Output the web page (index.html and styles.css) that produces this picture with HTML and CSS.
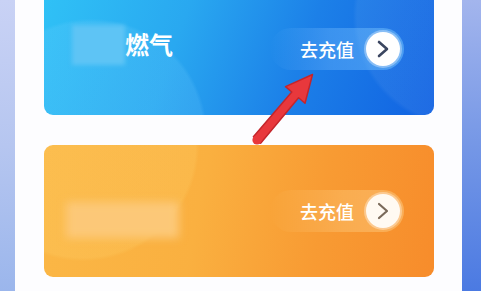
FILE: index.html
```html
<!DOCTYPE html>
<html lang="zh">
<head>
<meta charset="utf-8">
<link rel="stylesheet" href="styles.css">
</head>
<body>
<div class="screen">
  <div class="strip strip-left"></div>
  <div class="panel">
    <div class="card card-blue">
      <div class="card-left">
        <div class="blur blur-blue"></div>
        <div class="title">燃气</div>
      </div>
      <div class="action">
        <span class="action-text">去充值</span>
        <span class="circle">
          <svg width="16" height="18" viewBox="0 0 16 18"><path d="M4 2 L12 9 L4 16" fill="none" stroke="#3b4660" stroke-width="2.6" stroke-linecap="round" stroke-linejoin="round"/></svg>
        </span>
      </div>
    </div>
    <div class="card card-orange">
      <div class="card-left">
        <div class="blur blur-orange"></div>
      </div>
      <div class="action">
        <span class="action-text">去充值</span>
        <span class="circle">
          <svg width="16" height="18" viewBox="0 0 16 18"><path d="M4 2 L12 9 L4 16" fill="none" stroke="#7a6a5a" stroke-width="2.2" stroke-linecap="round" stroke-linejoin="round"/></svg>
        </span>
      </div>
    </div>
  </div>
  <div class="strip strip-right"></div>
  <svg class="pointer" width="90" height="100" viewBox="240 60 90 100">
    <path d="M260.6 143.2 L298.6 97.8 L305 103.2 L312.5 74.5 L285.5 86.6 L291.8 92 L253.4 136.8 Z" fill="#e8383c" stroke="#c4252b" stroke-width="1.5" stroke-linejoin="round"/>
    <circle cx="257" cy="140" r="4.6" fill="#e8383c"/>
  </svg>
</div>
</body>
</html>
```

FILE: styles.css
```css
html, body {
  margin: 0;
  padding: 0;
}
body {
  width: 481px;
  height: 291px;
  overflow: hidden;
  font-family: "Noto Sans CJK SC", "Noto Sans", sans-serif;
}
.screen {
  position: relative;
  display: flex;
  width: 481px;
  height: 291px;
  overflow: hidden;
}
.strip-left {
  width: 15px;
  background: linear-gradient(180deg, #c9d2f5 0%, #b6c6f0 50%, #9bb6ec 100%);
}
.strip-right {
  width: 19px;
  background: linear-gradient(180deg, #a3b5ed 0%, #7597e6 50%, #4b7ae2 100%);
}
.panel {
  flex: 1;
  background: #fdfdff;
  padding: 0 28px 0 29px;
  display: flex;
  flex-direction: column;
  gap: 30px;
}
.card {
  height: 132px;
  border-radius: 9px;
  display: flex;
  align-items: center;
  justify-content: space-between;
  padding: 0 34px 0 28px;
  position: relative;
  overflow: hidden;
  flex-shrink: 0;
}
.card-blue {
  margin-top: -17px;
  background:
    radial-gradient(circle at 12% 115%, rgba(120, 210, 255, 0.18) 0, rgba(120, 210, 255, 0.18) 30%, transparent 31%),
    radial-gradient(circle at 108% 25%, rgba(255, 255, 255, 0.06) 0, rgba(255, 255, 255, 0.06) 25%, transparent 26%),
    linear-gradient(110deg, #30c2f6 0%, #29a8f0 35%, #1c80e8 65%, #1162e2 100%);
}
.card-orange {
  background:
    radial-gradient(circle at 10% 0%, rgba(255, 220, 120, 0.18) 0, rgba(255, 220, 120, 0.18) 30%, transparent 31%),
    linear-gradient(100deg, #fbb746 0%, #fab040 40%, #f89b33 70%, #f78c2b 100%);
}
.card-left {
  display: flex;
  align-items: center;
}
.blur {
  filter: blur(2px);
}
.blur-blue {
  width: 53px;
  height: 40px;
  background: #5ec4f5;
  margin-top: -8px;
}
.title {
  color: #ffffff;
  font-size: 24px;
  font-weight: 700;
  line-height: 30px;
  margin-top: -11px;
}
.blur-orange {
  width: 113px;
  height: 36px;
  background: #fcc878;
  filter: blur(4px);
  margin-top: 18px;
  margin-left: -6px;
}
.action {
  display: flex;
  align-items: center;
  gap: 12px;
  padding: 4px 4px 4px 30px;
  margin-right: -4px;
  border-radius: 22px;
}
.card-blue .action {
  background: linear-gradient(90deg, rgba(255, 255, 255, 0) 0%, rgba(120, 190, 255, 0.35) 45%, rgba(120, 200, 255, 0.5) 100%);
}
.card-orange .action {
  background: linear-gradient(90deg, rgba(255, 255, 255, 0) 0%, rgba(255, 220, 150, 0.30) 55%, rgba(255, 230, 170, 0.35) 100%);
}
.action-text {
  color: #ffffff;
  font-size: 18px;
  font-weight: 500;
  line-height: 24px;
}
.circle {
  width: 34px;
  height: 34px;
  border-radius: 50%;
  background: #ffffff;
  display: flex;
  align-items: center;
  justify-content: center;
  box-shadow: 0 0 0 2px rgba(255, 255, 255, 0.35);
}
.card-orange .circle {
  background: #fffaf2;
}
.pointer {
  position: absolute;
  left: 240px;
  top: 60px;
}
```
